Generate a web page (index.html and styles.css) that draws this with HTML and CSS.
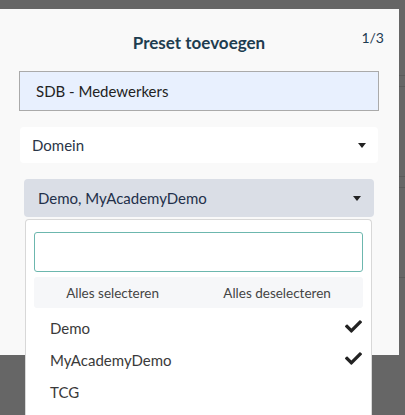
FILE: index.html
```html
<!DOCTYPE html>
<html lang="nl">
<head>
    <meta charset="UTF-8">
    <meta name="viewport" content="width=device-width, initial-scale=1.0">
    <title>Preset toevoegen</title>
    <link rel="stylesheet" href="styles.css">
</head>
<body>
    <div class="modal">
        <span class="step">1/3</span>
        <h2 class="modal-title">Preset toevoegen</h2>

        <input class="name-input" type="text" value="SDB - Medewerkers">

        <div class="select-box">
            <span>Domein</span>
            <span class="caret"></span>
        </div>

        <div class="multi-select">
            <div class="multi-toggle">
                <span>Demo, MyAcademyDemo</span>
                <span class="caret"></span>
            </div>
            <div class="multi-menu">
                <input class="search-input" type="text">
                <div class="bulk-actions">
                    <span>Alles selecteren</span>
                    <span>Alles deselecteren</span>
                </div>
                <ul class="options">
                    <li class="selected">Demo
                        <svg class="check" viewBox="0 0 512 512"><path d="M173.9 439.4 7.5 273c-10-10-10-26.2 0-36.2l36.2-36.2c10-10 26.2-10 36.2 0L192 312.7 432.1 72.6c10-10 26.2-10 36.2 0l36.2 36.2c10 10 10 26.2 0 36.2L210.1 439.4c-10 10-26.2 10-36.2 0z"/></svg>
                    </li>
                    <li class="selected">MyAcademyDemo
                        <svg class="check" viewBox="0 0 512 512"><path d="M173.9 439.4 7.5 273c-10-10-10-26.2 0-36.2l36.2-36.2c10-10 26.2-10 36.2 0L192 312.7 432.1 72.6c10-10 26.2-10 36.2 0l36.2 36.2c10 10 10 26.2 0 36.2L210.1 439.4c-10 10-26.2 10-36.2 0z"/></svg>
                    </li>
                    <li>TCG</li>
                </ul>
            </div>
        </div>
    </div>
</body>
</html>
```

FILE: styles.css
```css
body {
    margin: 0;
    padding-top: 9px;
    height: 415px;
    box-sizing: border-box;
    overflow: hidden;
    background-color: #666666;
    /* faint table rules of the page behind the backdrop */
    background-image:
        linear-gradient(#5a5a5a, #5a5a5a),
        linear-gradient(#5a5a5a, #5a5a5a),
        linear-gradient(#5a5a5a, #5a5a5a),
        linear-gradient(#5a5a5a, #5a5a5a),
        linear-gradient(#5a5a5a, #5a5a5a);
    background-size: 100% 1px;
    background-repeat: no-repeat;
    background-position: 0 75px, 0 86px, 0 176px, 0 187px, 0 277px;
    font-family: "Lato", "Noto Sans", sans-serif;
}
.modal {
    position: relative;
    width: 399px;
    height: 346px;
    background-color: #f9f9f9;
    padding: 15px 20px 0 19px;
    box-sizing: border-box;
}
.step {
    position: absolute;
    top: 20px;
    right: 15px;
    font-size: 14px;
    color: #1d3b52;
}
.modal-title {
    margin: 0 0 18px 0;
    padding-top: 9px;
    text-align: center;
    font-size: 17px;
    font-weight: 700;
    color: #1e3d50;
    line-height: 20px;
}
.name-input {
    display: block;
    width: 100%;
    height: 40px;
    box-sizing: border-box;
    border: 1px solid #aaaaaa;
    background-color: #e8f0fe;
    padding: 0 16px;
    font-family: inherit;
    font-size: 15px;
    color: #222;
    margin: 0;
}
.select-box {
    margin: 16px 1px 0 1px;
    height: 36px;
    background-color: #fff;
    border-radius: 4px;
    display: flex;
    align-items: center;
    justify-content: space-between;
    padding: 0 12px;
    font-size: 15px;
    color: #2a3547;
}
.caret {
    width: 0;
    height: 0;
    border-left: 4px solid transparent;
    border-right: 4px solid transparent;
    border-top: 5px solid #222;
}
.multi-select {
    position: relative;
    margin: 16px 5px 0 5px;
}
.multi-toggle {
    height: 38px;
    background-color: #dadee6;
    border-radius: 4px;
    display: flex;
    align-items: center;
    justify-content: space-between;
    padding: 0 13px 0 14px;
    font-size: 15px;
    color: #22304a;
}
.multi-menu {
    position: absolute;
    top: 40px;
    left: 1px;
    width: 347px;
    height: 196px;
    box-sizing: border-box;
    background-color: #fff;
    border: 1px solid #d8d8d8;
    border-bottom: none;
    border-radius: 4px 4px 0 0;
    padding: 12px 8px 0 8px;
}
.search-input {
    display: block;
    width: 100%;
    height: 40px;
    box-sizing: border-box;
    border: 1px solid #6cb7ae;
    border-radius: 3px;
    margin: 0;
}
.bulk-actions {
    margin-top: 5px;
    height: 31px;
    background-color: #f6f7f9;
    border-radius: 3px;
    display: flex;
    align-items: center;
    justify-content: space-around;
    font-size: 13.5px;
    color: #444;
}
.options {
    list-style: none;
    margin: 4px 0 0 0;
    padding: 0;
}
.options li {
    height: 32px;
    display: flex;
    align-items: center;
    justify-content: space-between;
    padding: 0 1px 0 16px;
    font-size: 15px;
    color: #3a3a3a;
}
.check {
    width: 17px;
    height: 17px;
    margin-top: -4px;
    fill: #222;
}
```
